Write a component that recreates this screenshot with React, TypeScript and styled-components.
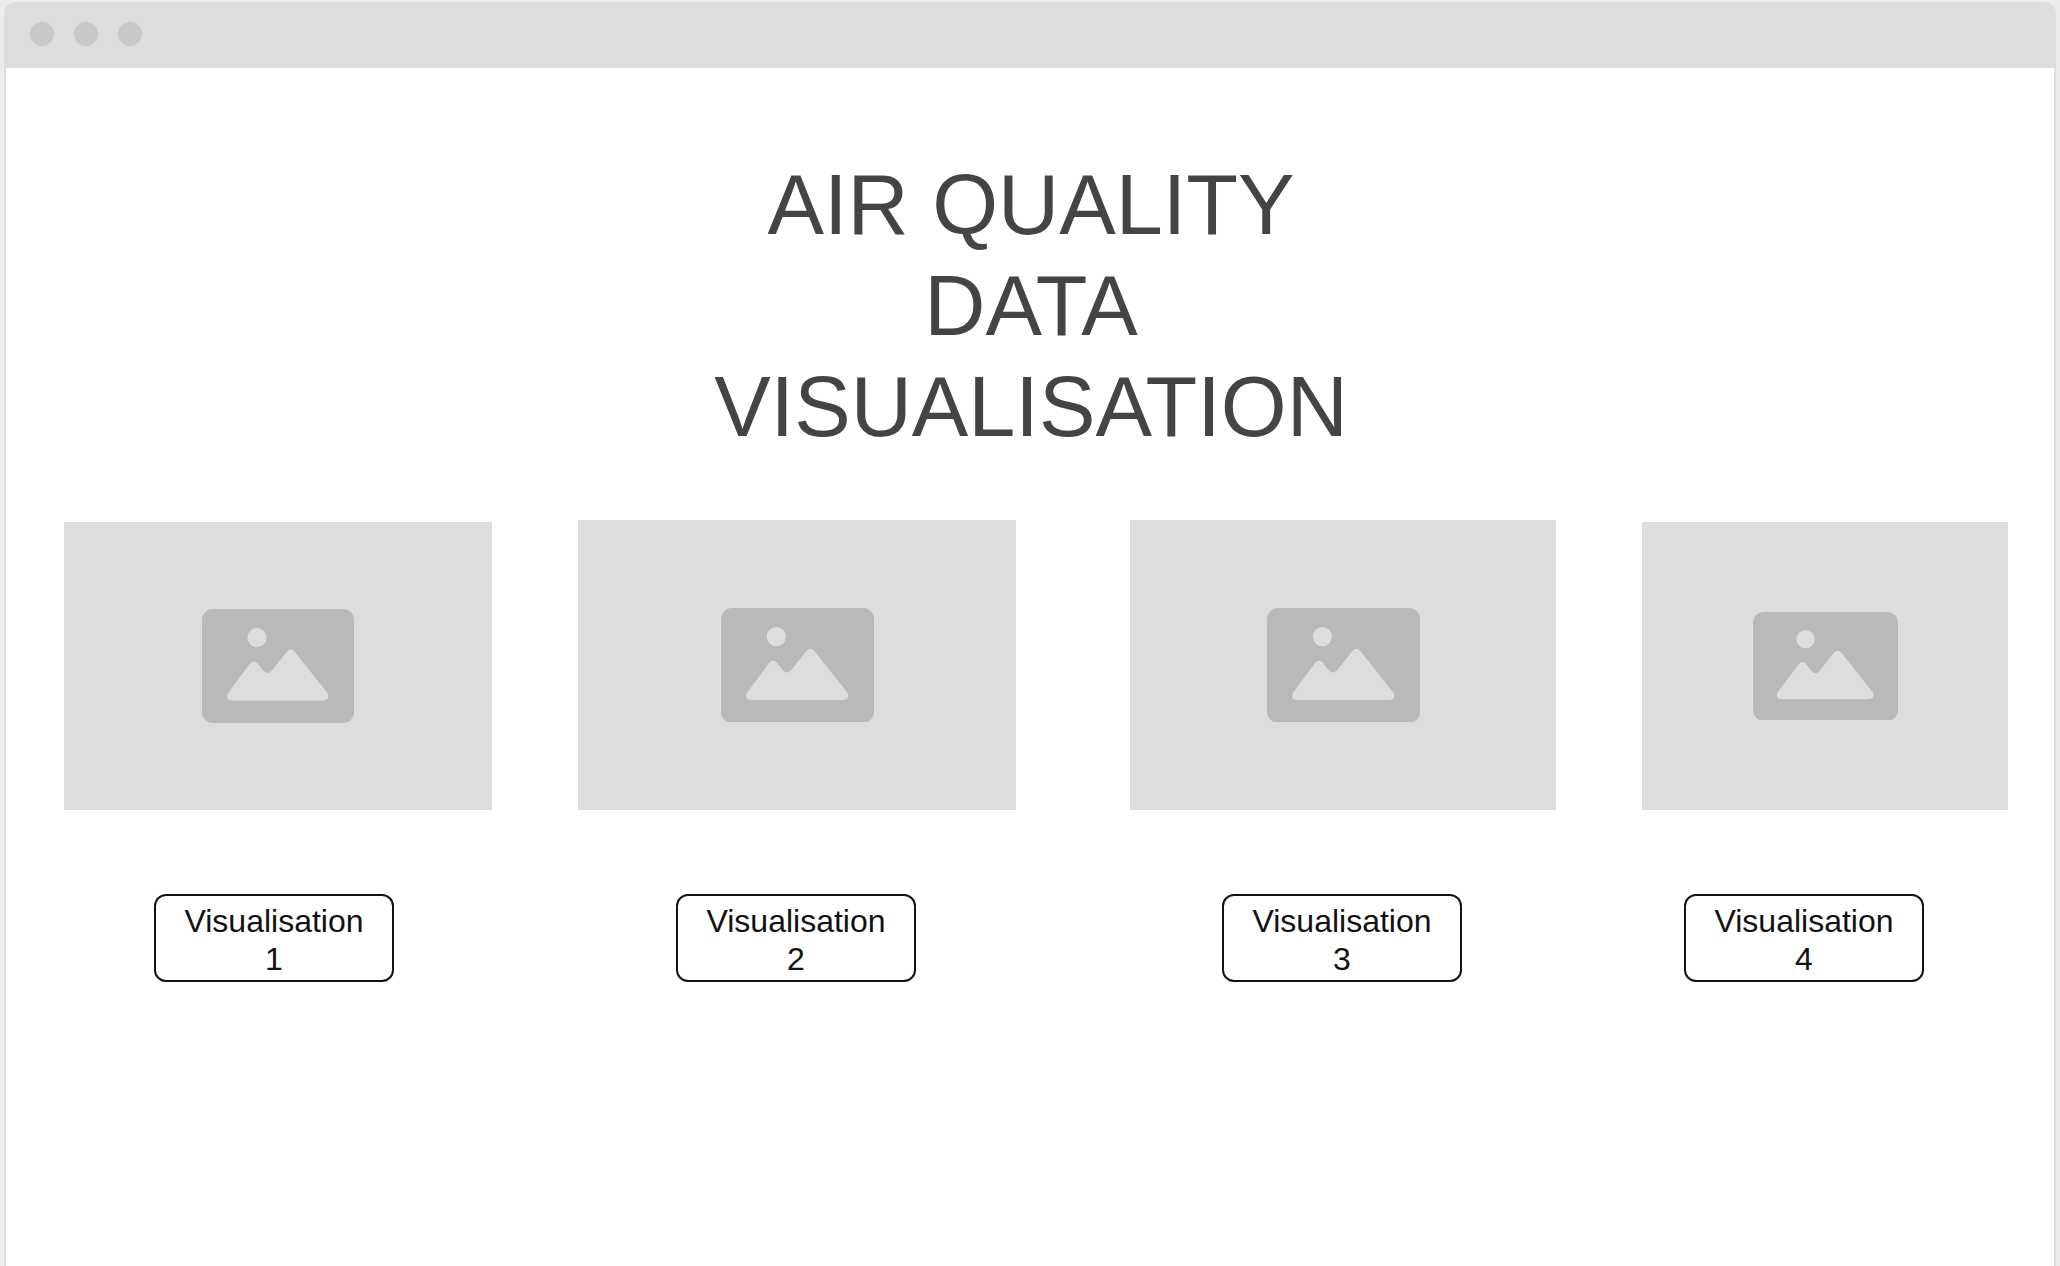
import React from "react";
import styled, { createGlobalStyle } from "styled-components";

const Global = createGlobalStyle`
  html, body { margin: 0; padding: 0; background: #ececec; }
  body { font-family: "Liberation Sans", Arial, sans-serif; }
`;

const Page = styled.div`
  box-sizing: border-box;
  height: 1266px;
  padding: 2px 4px 0;
  overflow: hidden;
`;

const Win = styled.div`
  box-sizing: border-box;
  height: 1264px;
  background: #fff;
  border-left: 2px solid #dddddd;
  border-right: 2px solid #dddddd;
  border-radius: 12px 12px 0 0;
`;

const TitleBar = styled.div`
  box-sizing: border-box;
  display: flex;
  align-items: center;
  gap: 20px;
  height: 66px;
  margin: 0 -2px;
  padding: 0 0 2px 26px;
  background: #dddddd;
  border-radius: 12px 12px 0 0;
`;

const Dot = styled.span`
  width: 24px;
  height: 24px;
  border-radius: 50%;
  background: #c8c8c8;
`;

const Main = styled.main`
  padding-top: 86px;
`;

const Heading = styled.h1`
  margin: 0;
  padding-left: 2px;
  text-align: center;
  font-size: 84.7px;
  line-height: 101px;
  font-weight: 400;
  color: #444444;
`;

const Gallery = styled.div`
  display: flex;
  align-items: flex-end;
  height: 290px;
  margin-top: 63px;
`;

const Placeholder = styled.div<{ $w: number; $h: number; $x: number }>`
  display: flex;
  align-items: center;
  justify-content: center;
  flex: none;
  width: ${(p) => p.$w}px;
  height: ${(p) => p.$h}px;
  margin-left: ${(p) => p.$x}px;
  background: #dddddd;
`;

const Actions = styled.div`
  display: flex;
  margin-top: 84px;
`;

const VisButton = styled.button<{ $x: number }>`
  box-sizing: border-box;
  flex: none;
  width: 240px;
  height: 88px;
  margin-left: ${(p) => p.$x}px;
  padding: 4px 20px 0;
  background: #fff;
  border: 2px solid #111111;
  border-radius: 12px;
  font-family: inherit;
  font-size: 32px;
  line-height: 38px;
  color: #111111;
  display: block;
  text-align: center;
`;

const ImageIcon = ({ width }: { width: number }) => (
  <svg width={width} height={(width * 114) / 152} viewBox="0 0 152 114" aria-hidden="true">
    <rect width="152" height="114" rx="11" fill="#b9b9b9" />
    <circle cx="55" cy="28.5" r="9.6" fill="#dddddd" />
    <path
      d="M31 91.5H120Q128.8 91.5 125.5 84L92.5 42.5Q88.7 38.5 85 42.5L69.5 62Q65.3 66 61.5 62L55.5 54.5Q51.7 50.5 48 54.5L26 84Q22.5 91.5 31 91.5Z"
      fill="#dddddd"
    />
  </svg>
);

const cards = [
  { w: 428, h: 288, x: 58, icon: 152 },
  { w: 438, h: 290, x: 86, icon: 153 },
  { w: 426, h: 290, x: 114, icon: 153 },
  { w: 366, h: 288, x: 86, icon: 145 },
];

const buttons = [
  { n: 1, x: 148 },
  { n: 2, x: 282 },
  { n: 3, x: 306 },
  { n: 4, x: 222 },
];

export default function App() {
  return (
    <Page>
      <Global />
      <Win>
        <TitleBar>
          <Dot />
          <Dot />
          <Dot />
        </TitleBar>
        <Main>
          <Heading>
            AIR QUALITY
            <br />
            DATA
            <br />
            VISUALISATION
          </Heading>
          <Gallery>
            {cards.map((c, i) => (
              <Placeholder key={i} $w={c.w} $h={c.h} $x={c.x}>
                <ImageIcon width={c.icon} />
              </Placeholder>
            ))}
          </Gallery>
          <Actions>
            {buttons.map((b) => (
              <VisButton key={b.n} $x={b.x}>
                Visualisation
                <br />
                {b.n}
              </VisButton>
            ))}
          </Actions>
        </Main>
      </Win>
    </Page>
  );
}
